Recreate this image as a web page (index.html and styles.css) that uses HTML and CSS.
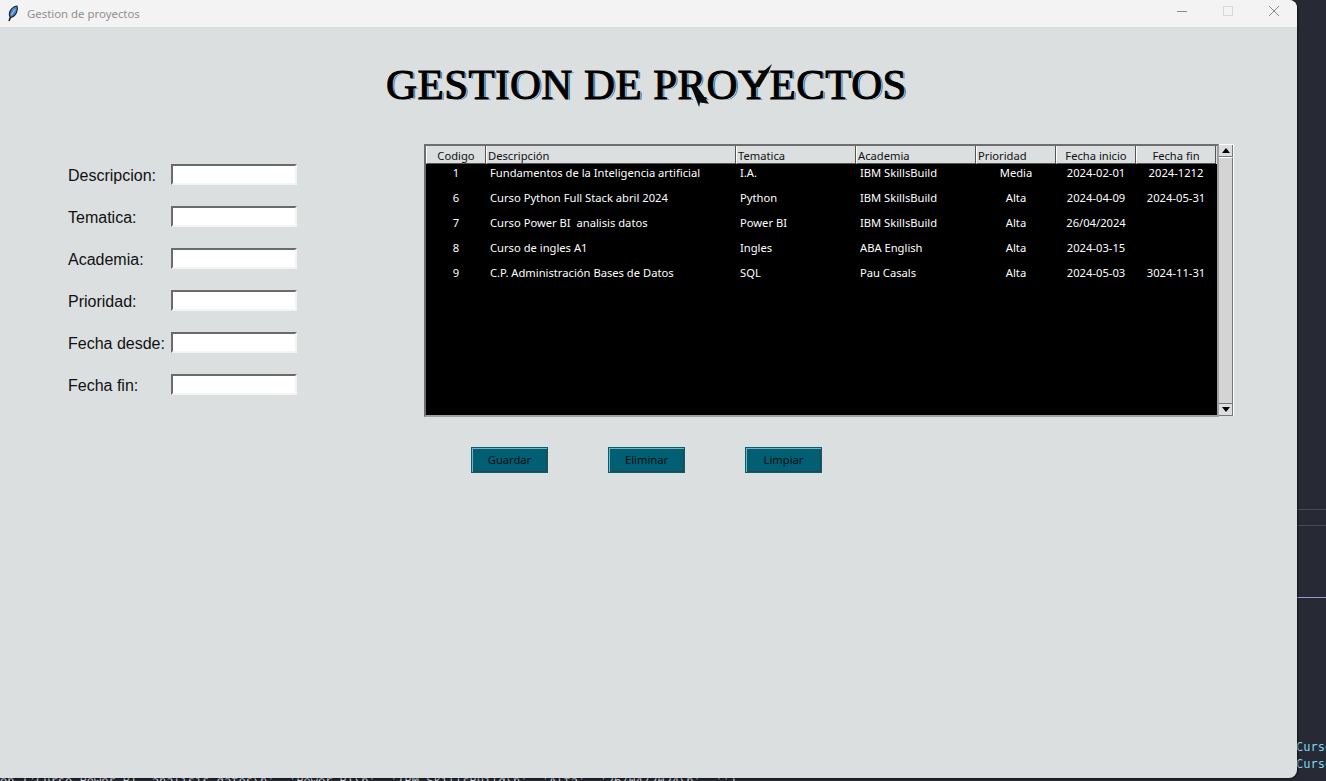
FILE: index.html
```html
<!DOCTYPE html>
<html lang="es">
<head>
    <meta charset="UTF-8">
    <meta name="viewport" content="width=device-width, initial-scale=1.0">
    <title>Gestion de proyectos</title>
    <link rel="stylesheet" href="styles.css">
</head>
<body>
    <!-- editor visible behind the window -->
    <div class="editor-line line-a"></div>
    <div class="editor-line line-b"></div>
    <div class="editor-line line-c"></div>
    <div class="term-side">Curso<br>Curso</div>
    <div class="term-bottom">on ('Curso Power BI  analisis datos\n', 'Power BI\n', 'IBM SkillsBuild\n', 'Alta', '26/04/2024\n', '')</div>

    <div class="window">
        <div class="titlebar">
            <svg class="feather" width="12" height="17" viewBox="0 0 12 17">
                <path d="M2 16 L4 11" stroke="#111" stroke-width="1.5" fill="none"/>
                <path d="M3 12 C1 8 4 2 10 1 C11.5 5 9 11 4 12.5 Z" fill="#4f86c9" stroke="#1a2433" stroke-width="1.1"/>
                <path d="M4.5 10 L8 4" stroke="#a9c9ee" stroke-width="1" fill="none"/>
            </svg>
            <span class="titlebar-text">Gestion de proyectos</span>
            <div class="win-controls">
                <svg class="win-btn" width="46" height="12" viewBox="0 0 46 12"><path d="M18 6.5 H28" stroke="#8a8a8a" stroke-width="1"/></svg>
                <svg class="win-btn" width="46" height="12" viewBox="0 0 46 12"><rect x="18.5" y="1.5" width="9" height="9" fill="none" stroke="#d8d8d8" stroke-width="1"/></svg>
                <svg class="win-btn" width="46" height="12" viewBox="0 0 46 12"><path d="M18 1 L28 11 M28 1 L18 11" stroke="#8a8a8a" stroke-width="1"/></svg>
            </div>
        </div>

        <div class="content">
            <h1 class="app-title">GESTION DE PROYECTOS</h1>

            <div class="main-row">
                <form class="project-form">
                    <label for="descripcion">Descripcion:</label>
                    <input id="descripcion" type="text">
                    <label for="tematica">Tematica:</label>
                    <input id="tematica" type="text">
                    <label for="academia">Academia:</label>
                    <input id="academia" type="text">
                    <label for="prioridad">Prioridad:</label>
                    <input id="prioridad" type="text">
                    <label for="desde">Fecha desde:</label>
                    <input id="desde" type="text">
                    <label for="fin">Fecha fin:</label>
                    <input id="fin" type="text">
                </form>

                <div class="right-col">
                    <div class="tree-wrap">
                        <div class="tree">
                            <div class="tree-head">
                                <div class="center">Codigo</div>
                                <div>Descripción</div>
                                <div>Tematica</div>
                                <div>Academia</div>
                                <div>Prioridad</div>
                                <div class="center">Fecha inicio</div>
                                <div class="center">Fecha fin</div>
                            </div>
                            <div class="tree-rows">
                                <div class="tree-row">
                                    <div class="center">1</div><div>Fundamentos de la Inteligencia artificial</div><div>I.A.</div><div>IBM SkillsBuild</div><div class="center">Media</div><div class="center">2024-02-01</div><div class="center">2024-1212</div>
                                </div>
                                <div class="tree-row">
                                    <div class="center">6</div><div>Curso Python Full Stack abril 2024</div><div>Python</div><div>IBM SkillsBuild</div><div class="center">Alta</div><div class="center">2024-04-09</div><div class="center">2024-05-31</div>
                                </div>
                                <div class="tree-row">
                                    <div class="center">7</div><div>Curso Power BI&nbsp; analisis datos</div><div>Power BI</div><div>IBM SkillsBuild</div><div class="center">Alta</div><div class="center">26/04/2024</div><div class="center"></div>
                                </div>
                                <div class="tree-row">
                                    <div class="center">8</div><div>Curso de ingles A1</div><div>Ingles</div><div>ABA English</div><div class="center">Alta</div><div class="center">2024-03-15</div><div class="center"></div>
                                </div>
                                <div class="tree-row">
                                    <div class="center">9</div><div>C.P. Administración Bases de Datos</div><div>SQL</div><div>Pau Casals</div><div class="center">Alta</div><div class="center">2024-05-03</div><div class="center">3024-11-31</div>
                                </div>
                            </div>
                        </div>
                        <div class="scrollbar">
                            <div class="scroll-btn"><span class="arrow-up"></span></div>
                            <div class="scroll-thumb"></div>
                            <div class="scroll-btn"><span class="arrow-down"></span></div>
                        </div>
                    </div>

                    <div class="actions">
                        <button type="button" class="btn">Guardar</button>
                        <button type="button" class="btn">Eliminar</button>
                        <button type="button" class="btn">Limpiar</button>
                    </div>
                </div>
            </div>
        </div>
    </div>
</body>
</html>
```

FILE: styles.css
```css
body {
    margin: 0;
    height: 781px;
    overflow: hidden;
    position: relative;
    background-color: #272934;
    font-family: "Noto Sans", sans-serif;
}

/* things behind the window */
.editor-line {
    position: absolute;
    left: 1297px;
    right: 0;
    height: 1px;
    background-color: #474955;
}

.line-a { top: 509px; }
.line-b { top: 525px; }
.line-c { top: 597px; background-color: #a98fd6; }

.term-side {
    position: absolute;
    left: 1296px;
    top: 739px;
    font-family: "DejaVu Sans Mono", monospace;
    font-size: 12px;
    line-height: 17px;
    color: #7fd7ee;
}

.term-bottom {
    position: absolute;
    left: 0;
    top: 773px;
    font-family: "DejaVu Sans Mono", monospace;
    font-size: 12px;
    line-height: 17px;
    white-space: pre;
    color: #d8dce2;
}

/* window */
.window {
    position: absolute;
    left: 0;
    top: 0;
    width: 1297px;
    height: 778px;
    background-color: #dbdfe0;
    border-radius: 0 8px 8px 0;
    box-shadow: 1px 1px 2px rgba(0, 0, 0, 0.5);
    overflow: hidden;
}

.titlebar {
    display: flex;
    align-items: center;
    height: 27px;
    padding-left: 7px;
    background-color: #f3f3f3;
}

.feather {
    margin-right: 8px;
}

.titlebar-text {
    font-size: 11.4px;
    color: #8f8f8f;
}

.win-controls {
    display: flex;
    margin-left: auto;
    margin-top: -5px;
}

.content {
    display: flex;
    flex-direction: column;
}

.app-title {
    position: relative;
    margin: 33px 4px 0 0;
    height: 84px;
    text-align: center;
    font-family: "Liberation Serif", serif;
    font-size: 43px;
    line-height: 50px;
    font-weight: normal;
    letter-spacing: 0.4px;
    color: #000;
    -webkit-text-stroke: 1px #000;
    text-shadow: 1px 1px 0 #dbdfe0, 2px 1px 0 #3f6f96;
}

/* the swash on the Y and the leg of the R */
.app-title::before,
.app-title::after {
    content: "";
    position: absolute;
    background-color: #0a0a0a;
}

.app-title::before {
    left: 754px;
    top: 4px;
    width: 18px;
    height: 23px;
    clip-path: polygon(0 100%, 55% 30%, 100% 0, 80% 35%, 30% 100%);
}

.app-title::after {
    left: 691px;
    top: 26px;
    width: 18px;
    height: 21px;
    clip-path: polygon(0 0, 30% 0, 100% 85%, 50% 78%, 45% 100%);
}

.main-row {
    display: flex;
    align-items: flex-start;
}

/* form */
.project-form {
    display: grid;
    grid-template-columns: 103px 126px;
    grid-auto-rows: 21px;
    row-gap: 21px;
    margin: 20px 127px 0 68px;
    font-family: "Liberation Sans", sans-serif;
    font-size: 16px;
    color: #111;
}

.project-form label {
    line-height: 24px;
    white-space: nowrap;
}

.project-form input {
    box-sizing: border-box;
    width: 126px;
    height: 21px;
    margin: 0;
    padding: 0 2px;
    background-color: #fff;
    border-style: solid;
    border-width: 2px;
    border-color: #6b6b6b #f4f4f4 #f4f4f4 #6b6b6b;
    outline: none;
}

/* table */
.right-col {
    display: flex;
    flex-direction: column;
}

.tree-wrap {
    display: flex;
    align-items: flex-start;
}

.tree {
    box-sizing: border-box;
    width: 795px;
    height: 273px;
    background-color: #000;
    border: 2px solid #6e6e6e;
    border-right-color: #a0a0a0;
    border-bottom-color: #a0a0a0;
    overflow: hidden;
    font-size: 11.2px;
}

.tree-head,
.tree-row {
    display: grid;
    grid-template-columns: 60px 250px 120px 120px 80px 80px 80px;
}

.tree-head {
    position: relative;
    height: 18px;
    background-color: #dbdfe0;
    color: #111;
    line-height: 19px;
}

.tree-head div {
    box-sizing: border-box;
    height: 18px;
    padding-left: 1px;
    border-left: 1px solid #fff;
    border-right: 1px solid #555;
    border-bottom: 1px solid #555;
}

.tree-head .center {
    padding-left: 0;
}

.tree-rows {
    margin-top: -4px;
    color: #fff;
}

.tree-row {
    height: 25px;
    line-height: 25px;
}

.tree-row div {
    padding-left: 4px;
    white-space: nowrap;
}

.tree-row .center {
    padding-left: 0;
}

.center {
    text-align: center;
}

/* scrollbar */
.scrollbar {
    display: flex;
    flex-direction: column;
    box-sizing: border-box;
    width: 15px;
    height: 272px;
    background-color: #fff;
    padding: 1px 1px 0 0;
}

.scroll-btn {
    box-sizing: border-box;
    display: flex;
    align-items: center;
    justify-content: center;
    height: 12px;
    background-color: #dbdfe0;
    border-right: 1px solid #777;
    border-bottom: 1px solid #777;
}

.scroll-thumb {
    flex: 1;
    background-color: #d4d4d4;
    border-right: 1px solid #777;
    border-bottom: 1px solid #777;
    border-top: 1px solid #fff;
}

.arrow-up,
.arrow-down {
    width: 0;
    height: 0;
    border-left: 4px solid transparent;
    border-right: 4px solid transparent;
}

.arrow-up { border-bottom: 5px solid #000; }
.arrow-down { border-top: 5px solid #000; }

/* buttons */
.actions {
    display: flex;
    gap: 60px;
    margin: 30px 0 0 47px;
}

.btn {
    box-sizing: border-box;
    width: 77px;
    height: 26px;
    padding: 0 0 2px;
    font-family: "Noto Sans", sans-serif;
    font-size: 11.2px;
    color: #020d12;
    background-color: #005f73;
    border: 1px solid #005f73;
    box-shadow: inset 1px 1px 0 #7fb0ba, inset -1px -1px 0 #2f4349;
}
```
